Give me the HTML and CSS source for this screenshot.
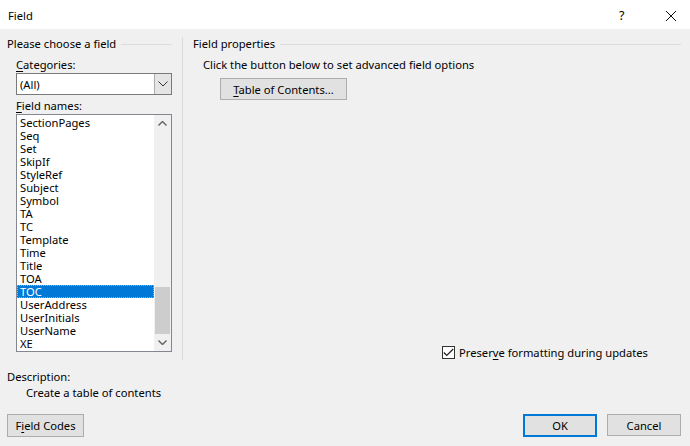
FILE: index.html
```html
<!DOCTYPE html>
<html lang="en">
<head>
  <meta charset="UTF-8" />
  <title>Field</title>
  <link rel="stylesheet" href="styles.css">
</head>
<body>
  <div class="janela">
    <div class="titulo">
      <span class="titulo-texto">Field</span>
      <span class="ajuda">?</span>
      <span class="fechar">
        <svg width="12" height="12" viewBox="0 0 12 12"><path d="M1 1 L11 11 M11 1 L1 11" stroke="#111" stroke-width="1" fill="none"/></svg>
      </span>
    </div>

    <div class="corpo">
      <div class="paineis">
        <div class="esquerda">
          <div class="grupo"><span>Please choose a field</span><div class="linha"></div></div>
          <div class="rotulo rotulo-cat"><u>C</u>ategories:</div>
          <div class="combo">
            <span class="combo-valor">(All)</span>
            <span class="combo-botao">
              <svg width="10" height="6" viewBox="0 0 10 6"><path d="M0.5 0.5 L5 5 L9.5 0.5" stroke="#333" fill="none"/></svg>
            </span>
          </div>
          <div class="rotulo rotulo-nomes"><u>F</u>ield names:</div>
          <div class="lista">
            <div class="itens">
              <div class="item">SectionPages</div>
              <div class="item">Seq</div>
              <div class="item">Set</div>
              <div class="item">SkipIf</div>
              <div class="item">StyleRef</div>
              <div class="item">Subject</div>
              <div class="item">Symbol</div>
              <div class="item">TA</div>
              <div class="item">TC</div>
              <div class="item">Template</div>
              <div class="item">Time</div>
              <div class="item">Title</div>
              <div class="item">TOA</div>
              <div class="item selecionado">TOC</div>
              <div class="item">UserAddress</div>
              <div class="item">UserInitials</div>
              <div class="item">UserName</div>
              <div class="item">XE</div>
            </div>
            <div class="rolagem">
              <div class="seta">
                <svg width="9" height="5" viewBox="0 0 9 5"><path d="M0.5 4.5 L4.5 0.5 L8.5 4.5" stroke="#606060" stroke-width="1.4" fill="none"/></svg>
              </div>
              <div class="trilho"><div class="polegar"></div></div>
              <div class="seta">
                <svg width="9" height="5" viewBox="0 0 9 5"><path d="M0.5 0.5 L4.5 4.5 L8.5 0.5" stroke="#606060" stroke-width="1.4" fill="none"/></svg>
              </div>
            </div>
          </div>
        </div>

        <div class="divisor"></div>

        <div class="direita">
          <div class="grupo"><span>Field properties</span><div class="linha"></div></div>
          <div class="instrucao">Click the button below to set advanced field options</div>
          <div class="linha-botao">
            <button class="botao botao-toc"><u>T</u>able of Contents...</button>
          </div>
          <div class="espaco"></div>
          <label class="opcao">
            <span class="caixa">
              <svg width="11" height="9" viewBox="0 0 11 9"><path d="M0.8 4.5 L3.8 7.5 L10.2 1" stroke="#222" stroke-width="1.2" fill="none"/></svg>
            </span>
            Preser<u>v</u>e formatting during updates
          </label>
        </div>
      </div>

      <div class="descricao">
        <div>Description:</div>
        <div class="descricao-texto">Create a table of contents</div>
      </div>

      <div class="rodape">
        <button class="botao botao-codigos">F<u>i</u>eld Codes</button>
        <div class="acoes">
          <button class="botao botao-ok">OK</button>
          <button class="botao">Cancel</button>
        </div>
      </div>
    </div>
  </div>
</body>
</html>
```

FILE: styles.css
```css
html, body {
  margin: 0;
  padding: 0;
  background: #f0f0f0;
  font-family: 'Noto Sans', sans-serif;
  font-size: 11.2px;
  color: #000;
  overflow: hidden;
}

u {
  text-decoration-thickness: 1px;
  text-underline-offset: 2px;
}

.janela {
  width: 690px;
  height: 446px;
  display: flex;
  flex-direction: column;
}

.titulo {
  height: 31px;
  background: #fff;
  display: flex;
  align-items: center;
  padding: 2px 0 0 8px;
  box-sizing: border-box;
}

.titulo-texto {
  flex: 1;
}

.ajuda {
  width: 16px;
  font-size: 12.5px;
  margin-right: 30px;
}

.fechar {
  display: flex;
  width: 25px;
}

.corpo {
  flex: 1;
  display: flex;
  flex-direction: column;
  padding: 7px 9px 9px 7px;
}

.paineis {
  display: flex;
  height: 324px;
}

.esquerda {
  width: 165px;
  display: flex;
  flex-direction: column;
}

.grupo {
  display: flex;
  align-items: center;
  height: 15px;
  line-height: 15px;
}

.grupo .linha {
  flex: 1;
  height: 1px;
  background: #dcdcdc;
  margin: 1px 0 0 5px;
}

.rotulo {
  margin-left: 9px;
  line-height: 15px;
}

.rotulo-cat {
  margin-top: 6px;
}

.rotulo-nomes {
  margin-top: 3px;
}

.combo {
  margin: 1px 0 0 9px;
  height: 20px;
  border: 1px solid #7a7a7a;
  background: #fff;
  display: flex;
}

.combo-valor {
  flex: 1;
  padding-left: 3px;
  line-height: 21px;
}

.combo-botao {
  width: 16px;
  background: #e5e5e5;
  border-left: 1px solid #acacac;
  display: flex;
  align-items: center;
  justify-content: center;
}

.lista {
  margin: 1px 0 0 9px;
  height: 236px;
  border: 1px solid #828790;
  background: #fff;
  display: flex;
}

.itens {
  flex: 1;
  padding-top: 1px;
}

.item {
  height: 13px;
  line-height: 14px;
  padding-left: 3px;
}

.selecionado {
  background: #0078d7;
  color: #fff;
  outline: 1px dotted #f0a060;
  outline-offset: -1px;
}

.rolagem {
  width: 17px;
  background: #f0f0f0;
  display: flex;
  flex-direction: column;
}

.seta {
  height: 17px;
  display: flex;
  align-items: center;
  justify-content: center;
}

.trilho {
  flex: 1;
  display: flex;
  flex-direction: column;
  justify-content: flex-end;
  padding: 0 1px;
}

.polegar {
  height: 47px;
  background: #cdcdcd;
}

.divisor {
  width: 1px;
  background: #dcdcdc;
  margin: 1px 0 0 10px;
}

.direita {
  flex: 1;
  display: flex;
  flex-direction: column;
  padding-left: 10px;
}

.instrucao {
  margin: 6px 0 0 10px;
  line-height: 15px;
}

.linha-botao {
  margin: 6px 0 0 27px;
}

.botao {
  font-family: inherit;
  font-size: 11.2px;
  color: #000;
  height: 22px;
  width: 74px;
  padding: 0;
  background: #e1e1e1;
  border: 1px solid #adadad;
}

.botao-toc {
  width: 127px;
}

.espaco {
  flex: 1;
}

.opcao {
  display: flex;
  align-items: center;
  margin: 0 0 0 249px;
  line-height: 15px;
}

.caixa {
  width: 11px;
  height: 11px;
  border: 1px solid #333;
  background: #fff;
  display: flex;
  align-items: center;
  justify-content: center;
  margin-right: 4px;
}

.descricao {
  margin-top: 9px;
  line-height: 16px;
}

.descricao-texto {
  margin-left: 19px;
}

.rodape {
  margin-top: 13px;
  display: flex;
  justify-content: space-between;
}

.botao-codigos {
  width: 77px;
  height: 23px;
}

.acoes {
  display: flex;
  gap: 10px;
}

.botao-ok {
  border: 2px solid #0078d7;
  height: 23px;
}
```
